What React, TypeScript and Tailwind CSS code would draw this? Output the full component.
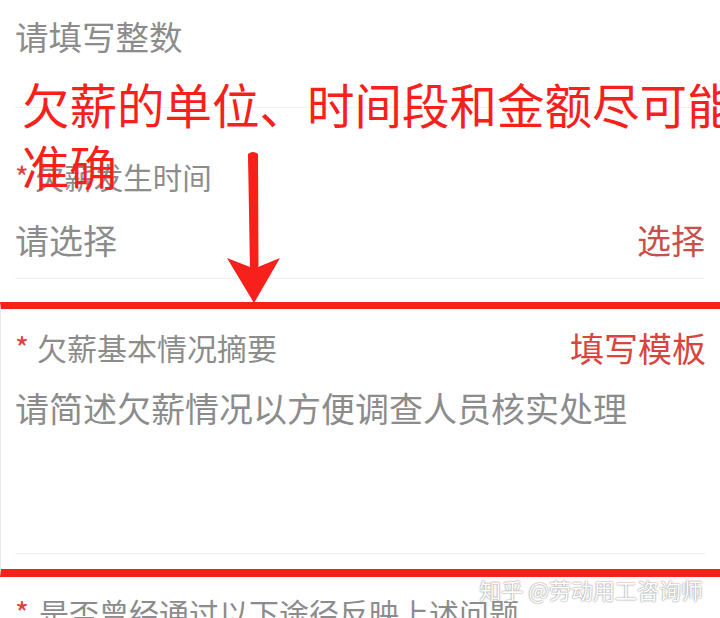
const font = { fontFamily: '"Noto Sans CJK SC", "Noto Sans", sans-serif' };

const Arrow = () => (
  <svg
    className="absolute left-[223px] top-[148px]"
    width="64"
    height="160"
    viewBox="0 0 64 160"
  >
    <path
      d="M25 6 Q30 2 35 6 L35.5 118 L34 120 L32 120 Z"
      fill="#f8201a"
    />
    <path d="M25 6 L35 6 L35 122 L27 122 Z" fill="#f8201a" />
    <path d="M4 110 L27 119 L35 119 L57 110 L31 155 Z" fill="#f8201a" />
  </svg>
);

const App = () => {
  return (
    <div
      className="relative w-[720px] h-[618px] overflow-hidden bg-white"
      style={font}
    >
      {/* form */}
      <div className="flex flex-col">
        <div className="mx-[15px] h-[108px] border-b border-[#f1f1f1]">
          <div className="pt-[14px] text-[33.5px] leading-[44px] text-[#8c8c8c]">
            请填写整数
          </div>
        </div>

        <div className="mx-[15px] h-[171px] border-b border-[#f1f1f1] pt-[48px]">
          <div className="flex h-[40px] items-center text-[29.5px] text-[#8c8c8c]">
            <span className="mr-[6px] text-[#e0403a]">*</span>
            欠薪发生时间
          </div>
          <div className="mt-[20px] flex h-[46px] items-center justify-between text-[34px]">
            <span className="text-[#8c8c8c]">请选择</span>
            <span className="text-[#c9504a]">选择</span>
          </div>
        </div>

        <div className="h-[23px]" />

        <div className="border-t-[7px] border-b-[8px] border-l border-t-[#f8201a] border-b-[#f8201a] border-l-[#e8e8e8]">
          <div className="mx-[14px] h-[245px] border-b border-[#f1f1f1] pt-[18px]">
            <div className="flex h-[40px] items-center justify-between">
              <div className="flex items-center text-[30px] text-[#8c8c8c]">
                <span className="mr-[8px] text-[#e0403a]">*</span>
                欠薪基本情况摘要
              </div>
              <span className="text-[34px] text-[#d9443c]">填写模板</span>
            </div>
            <div className="mt-[17px] flex h-[46px] items-center text-[34px] text-[#8c8c8c]">
              请简述欠薪情况以方便调查人员核实处理
            </div>
          </div>
          <div className="h-[15px]" />
        </div>

        <div className="mx-[15px] pt-[15px]">
          <div className="flex h-[40px] items-center text-[30px] text-[#8c8c8c]">
            <span className="mr-[10px] text-[#e0403a]">*</span>
            是否曾经通过以下途径反映上述问题
          </div>
        </div>
      </div>

      {/* annotation */}
      <div className="absolute left-[22px] top-[73px] text-[47.5px] leading-[62px] text-[#f8201a] whitespace-nowrap">
        <div>欠薪的单位、时间段和金额尽可能</div>
        <div>准确</div>
      </div>
      <Arrow />

      <div className="absolute right-[17px] top-[574px] text-[22px] leading-[30px] text-white [text-shadow:0_0_2px_#888,0_0_1px_#aaa]">
        知乎 @劳动用工咨询师
      </div>
    </div>
  );
};

export default App;
